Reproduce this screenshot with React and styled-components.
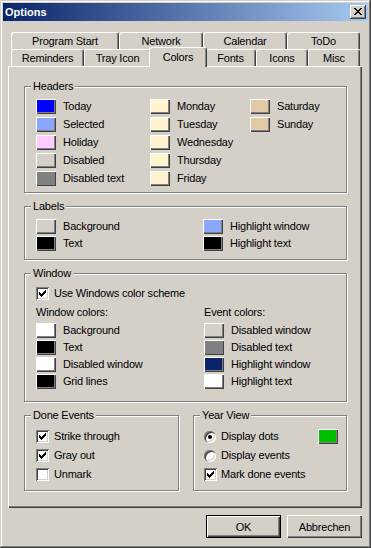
import React from 'react';
import styled, { createGlobalStyle } from 'styled-components';

const FACE = '#D4D0C8';

const GlobalStyle = createGlobalStyle`
  *, *::before, *::after { box-sizing: border-box; }
  html, body { margin: 0; padding: 0; background: ${FACE}; }
  body {
    font-family: "Liberation Sans", Arial, sans-serif;
    font-size: 11px;
    color: #000;
    letter-spacing: -0.2px;
  }
`;

const Window = styled.div`
  width: 371px;
  height: 548px;
  padding: 3px;
  background: ${FACE};
  box-shadow: inset -1px -1px 0 #404040, inset 1px 1px 0 ${FACE},
    inset -2px -2px 0 #808080, inset 2px 2px 0 #fff;
  display: flex;
  flex-direction: column;
  overflow: hidden;
`;

const TitleBar = styled.div`
  height: 18px;
  flex: none;
  display: flex;
  align-items: center;
  justify-content: space-between;
  padding: 0 2px;
  background: linear-gradient(to right, #0a246a, #a6caf0);
`;

const Title = styled.span`
  color: #fff;
  font-weight: bold;
  font-size: 11px;
  letter-spacing: 0;
`;

const CloseButton = styled.div`
  width: 16px;
  height: 14px;
  background: ${FACE};
  display: flex;
  align-items: center;
  justify-content: center;
  padding: 0 1px 1px 0;
  box-shadow: inset -1px -1px 0 #404040, inset 1px 1px 0 #fff,
    inset -2px -2px 0 #808080;
`;

const Body = styled.div`
  flex: 1;
  display: flex;
  flex-direction: column;
  padding: 11px 6px 7px 5px;
`;

const TabRow = styled.div`
  display: flex;
  height: 17px;
  flex: none;
  padding-left: 3px;
`;

const Tab = styled.div`
  width: ${(p) => p.$w + (p.$active ? 4 : 0)}px;
  height: ${(p) => (p.$active ? 20 : 17)}px;
  margin: ${(p) => (p.$active ? '-2px -2px -1px' : '0')};
  flex: none;
  position: relative;
  z-index: ${(p) => (p.$active ? 2 : 1)};
  background: ${FACE};
  border-top: 1px solid #fff;
  border-left: 1px solid #fff;
  border-right: 1px solid #404040;
  border-radius: 3px 3px 0 0;
  box-shadow: inset -1px 0 0 #808080;
  display: flex;
  justify-content: center;
  align-items: flex-start;
  padding-top: ${(p) => (p.$active ? 3 : 2)}px;
  line-height: 13px;
  white-space: nowrap;
`;

const Panel = styled.div`
  height: 442px;
  flex: none;
  padding: 20px 0 0 16px;
  display: flex;
  flex-direction: column;
  gap: 13px;
  box-shadow: inset 1px 1px 0 #fff, inset -1px -1px 0 #404040,
    inset -2px -2px 0 #808080;
`;

const Group = styled.section`
  position: relative;
  flex: none;
  width: ${(p) => p.$w}px;
  height: ${(p) => p.$h}px;
  padding: ${(p) => p.$pad};
  border: 1px solid #808080;
  box-shadow: 1px 1px 0 #fff, inset 1px 1px 0 #fff;
`;

const Legend = styled.span`
  position: absolute;
  top: -7px;
  left: 6px;
  padding: 0 2px;
  background: ${FACE};
  line-height: 13px;
  white-space: nowrap;
`;

const ColorGrid = styled.div`
  display: grid;
  grid-template-columns: ${(p) => p.$cols};
  grid-template-rows: repeat(${(p) => p.$rows}, 15px);
  grid-auto-flow: column;
  row-gap: ${(p) => p.$gap}px;
`;

const ColorItem = styled.div`
  display: flex;
  align-items: center;
  gap: 7px;
  height: 15px;
  line-height: 15px;
  white-space: nowrap;
`;

const Swatch = styled.span`
  width: 20px;
  height: 15px;
  flex: none;
  background: ${(p) => p.$c};
  box-shadow: inset 1px 1px 0 #fff, inset -1px -1px 0 #404040,
    inset -2px -2px 0 #808080;
`;

const OptionRow = styled.div`
  display: flex;
  align-items: center;
  gap: ${(p) => p.$gap ?? 5}px;
  height: 13px;
  line-height: 13px;
  white-space: nowrap;
`;

const Spacer = styled.span`
  flex: 1;
`;

const CheckBox = styled.span`
  width: 13px;
  height: 13px;
  flex: none;
  background: #fff;
  display: flex;
  align-items: center;
  justify-content: center;
  box-shadow: inset 1px 1px 0 #808080, inset -1px -1px 0 #fff,
    inset 2px 2px 0 #404040, inset -2px -2px 0 ${FACE};
`;

const Radio = styled.span`
  width: 12px;
  height: 12px;
  flex: none;
  border-radius: 50%;
  background: #fff;
  display: flex;
  align-items: center;
  justify-content: center;
  box-shadow: inset 1px 1px 0 #808080, inset 2px 2px 0 #404040,
    inset -1px -1px 0 #fff, inset -2px -2px 0 ${FACE};
  &::after {
    content: '';
    display: ${(p) => (p.$on ? 'block' : 'none')};
    width: 4px;
    height: 4px;
    border-radius: 50%;
    background: #000;
  }
`;

const Columns = styled.div`
  display: grid;
  grid-template-columns: 168px auto;
  margin-top: 6px;
`;

const Column = styled.div`
  display: flex;
  flex-direction: column;
`;

const SubHeading = styled.div`
  line-height: 13px;
  height: 13px;
  margin-bottom: 4px;
  white-space: nowrap;
`;

const SwatchList = styled.div`
  display: flex;
  flex-direction: column;
  gap: 2px;
`;

const OptionList = styled.div`
  display: flex;
  flex-direction: column;
  gap: 6px;
`;

const BottomRow = styled.div`
  display: flex;
  gap: 14px;
`;

const ButtonRow = styled.div`
  display: flex;
  justify-content: flex-end;
  gap: 6px;
  margin-top: 7px;
`;

const Button = styled.div`
  width: 75px;
  height: 23px;
  display: flex;
  align-items: center;
  justify-content: center;
  background: ${FACE};
  border: ${(p) => (p.$default ? '1px solid #000' : 'none')};
  box-shadow: inset 1px 1px 0 #fff, inset -1px -1px 0 #404040,
    inset -2px -2px 0 #808080;
  white-space: nowrap;
`;

const pixelRects = (rows) =>
  rows.flatMap((row, y) =>
    row
      .split('')
      .map((ch, x) => (ch === 'X' ? <rect key={`${x}-${y}`} x={x} y={y} width="1" height="1" /> : null))
      .filter(Boolean)
  );

const CLOSE_X = [
  'XX....XX',
  '.XX..XX.',
  '..XXXX..',
  '...XX...',
  '..XXXX..',
  '.XX..XX.',
  'XX....XX',
];

const CHECK = [
  '......X',
  '.....XX',
  'X...XXX',
  'XX.XXX.',
  'XXXXX..',
  '.XXX...',
  '..X....',
];

const CloseIcon = () => (
  <svg width="8" height="7" viewBox="0 0 8 7" fill="#000" shapeRendering="crispEdges">
    {pixelRects(CLOSE_X)}
  </svg>
);

const CheckMark = () => (
  <svg width="7" height="7" viewBox="0 0 7 7" fill="#000" shapeRendering="crispEdges">
    {pixelRects(CHECK)}
  </svg>
);

const Check = ({ on }) => <CheckBox>{on && <CheckMark />}</CheckBox>;

const Color = ({ label, c }) => (
  <ColorItem>
    <Swatch $c={c} />
    <span>{label}</span>
  </ColorItem>
);

const row1 = [
  ['Program Start', 108],
  ['Network', 84],
  ['Calendar', 84],
  ['ToDo', 73],
];
const row2 = [
  ['Reminders', 73],
  ['Tray Icon', 67],
  ['Colors', 54],
  ['Fonts', 51],
  ['Icons', 52],
  ['Misc', 52],
];

const CREAM = '#FFF3D0';
const TAN = '#E2CAA6';
const headers = [
  ['Today', '#0000FF'],
  ['Selected', '#8AA6FF'],
  ['Holiday', '#FFCCFF'],
  ['Disabled', FACE],
  ['Disabled text', '#808080'],
  ['Monday', CREAM],
  ['Tuesday', CREAM],
  ['Wednesday', CREAM],
  ['Thursday', CREAM],
  ['Friday', CREAM],
  ['Saturday', TAN],
  ['Sunday', TAN],
];

const labels = [
  ['Background', FACE],
  ['Text', '#000'],
  ['Highlight window', '#8AA6FF'],
  ['Highlight text', '#000'],
];

const windowColors = [
  ['Background', '#fff'],
  ['Text', '#000'],
  ['Disabled window', '#fff'],
  ['Grid lines', '#000'],
];

const eventColors = [
  ['Disabled window', FACE],
  ['Disabled text', '#808080'],
  ['Highlight window', '#0A246A'],
  ['Highlight text', '#fff'],
];

export default function App() {
  return (
    <>
      <GlobalStyle />
      <Window>
        <TitleBar>
          <Title>Options</Title>
          <CloseButton>
            <CloseIcon />
          </CloseButton>
        </TitleBar>
        <Body>
          <TabRow>
            {row1.map(([t, w]) => (
              <Tab key={t} $w={w}>
                {t}
              </Tab>
            ))}
          </TabRow>
          <TabRow>
            {row2.map(([t, w]) => (
              <Tab key={t} $w={w} $active={t === 'Colors'}>
                {t}
              </Tab>
            ))}
          </TabRow>
          <Panel>
            <Group $w={323} $h={107} $pad="12px 0 0 11px">
              <Legend>Headers</Legend>
              <ColorGrid $cols="114px 100px auto" $rows={5} $gap={3}>
                {headers.map(([l, c]) => (
                  <Color key={l} label={l} c={c} />
                ))}
              </ColorGrid>
            </Group>

            <Group $w={323} $h={54} $pad="12px 0 0 11px">
              <Legend>Labels</Legend>
              <ColorGrid $cols="167px auto" $rows={2} $gap={2}>
                {labels.map(([l, c]) => (
                  <Color key={l} label={l} c={c} />
                ))}
              </ColorGrid>
            </Group>

            <Group $w={323} $h={129} $pad="13px 0 0 11px">
              <Legend>Window</Legend>
              <OptionRow>
                <Check on />
                <span>Use Windows color scheme</span>
              </OptionRow>
              <Columns>
                <Column>
                  <SubHeading>Window colors:</SubHeading>
                  <SwatchList>
                    {windowColors.map(([l, c]) => (
                      <Color key={l} label={l} c={c} />
                    ))}
                  </SwatchList>
                </Column>
                <Column>
                  <SubHeading>Event colors:</SubHeading>
                  <SwatchList>
                    {eventColors.map(([l, c]) => (
                      <Color key={l} label={l} c={c} />
                    ))}
                  </SwatchList>
                </Column>
              </Columns>
            </Group>

            <BottomRow>
              <Group $w={155} $h={76} $pad="14px 0 0 11px">
                <Legend>Done Events</Legend>
                <OptionList>
                  <OptionRow>
                    <Check on />
                    <span>Strike through</span>
                  </OptionRow>
                  <OptionRow>
                    <Check on />
                    <span>Gray out</span>
                  </OptionRow>
                  <OptionRow>
                    <Check />
                    <span>Unmark</span>
                  </OptionRow>
                </OptionList>
              </Group>

              <Group $w={154} $h={76} $pad="14px 8px 0 10px">
                <Legend>Year View</Legend>
                <OptionList>
                  <OptionRow $gap={5}>
                    <Radio $on />
                    <span>Display dots</span>
                    <Spacer />
                    <Swatch $c="#00C000" />
                  </OptionRow>
                  <OptionRow $gap={5}>
                    <Radio />
                    <span>Display events</span>
                  </OptionRow>
                  <OptionRow $gap={4}>
                    <Check on />
                    <span>Mark done events</span>
                  </OptionRow>
                </OptionList>
              </Group>
            </BottomRow>
          </Panel>
          <ButtonRow>
            <Button $default>OK</Button>
            <Button>Abbrechen</Button>
          </ButtonRow>
        </Body>
      </Window>
    </>
  );
}
